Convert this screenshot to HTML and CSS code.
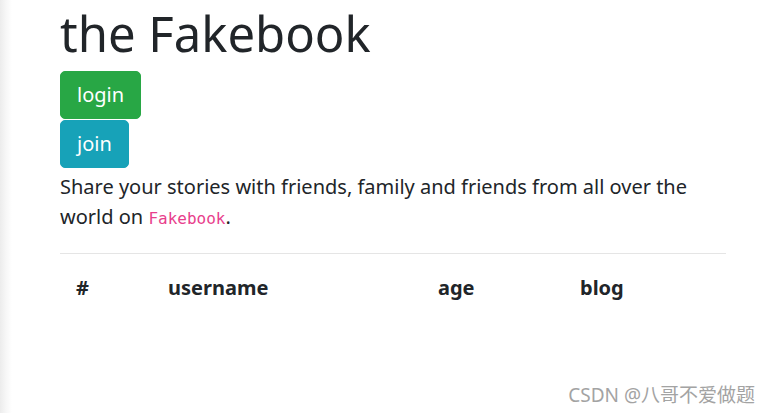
FILE: index.html
```html
<!DOCTYPE html>
<html>
<head>
<meta charset="utf-8">
<link rel="stylesheet" href="styles.css">
</head>
<body>
<div class="page">
  <div class="container">
    <h1 class="title">the Fakebook</h1>
    <div class="actions">
      <a class="btn btn-login">login</a>
      <a class="btn btn-join">join</a>
    </div>
    <p class="lead">Share your stories with friends, family and friends from all over the world on <code class="brand">Fakebook</code>.</p>
    <hr class="rule">
    <table class="users">
      <thead>
        <tr>
          <th class="c-id">#</th>
          <th class="c-user">username</th>
          <th class="c-age">age</th>
          <th class="c-blog">blog</th>
        </tr>
      </thead>
    </table>
  </div>
  <div class="watermark">CSDN @八哥不爱做题</div>
</div>
</body>
</html>
```
FILE: styles.css
```css
html, body {
  margin: 0;
  padding: 0;
  background: #fff;
}
.page {
  position: relative;
  width: 771px;
  height: 413px;
  overflow: hidden;
  font-family: "Noto Sans", "Open Sans", sans-serif;
  color: #212529;
  background: linear-gradient(to right, #ececec 0px, #f7f7f7 6px, #fff 12px);
}
.container {
  margin-left: 60px;
  width: 666px;
  display: flex;
  flex-direction: column;
}
.title {
  margin: 3px 0 8px 0;
  font-size: 49px;
  font-weight: 400;
  line-height: 60px;
}
.actions {
  display: flex;
  flex-direction: column;
  align-items: flex-start;
  gap: 1px;
}
.btn {
  display: inline-block;
  font-size: 20px;
  line-height: 30px;
  padding: 8px 16px;
  border: 1px solid transparent;
  border-radius: 5px;
  color: #fff;
}
.btn-login { background: #28a745; border-color: #28a745; }
.btn-join { background: #17a2b8; border-color: #17a2b8; }
.lead {
  margin: 4px 0 0 0;
  font-size: 20px;
  line-height: 30px;
}
.brand {
  font-family: "DejaVu Sans Mono", monospace;
  font-size: 16px;
  color: #e83e8c;
}
.rule {
  margin: 19px 0 0 0;
  border: 0;
  border-top: 1px solid rgba(0,0,0,.1);
}
.users {
  width: 100%;
  border-collapse: collapse;
  margin-top: 11px;
}
.users th {
  text-align: left;
  font-size: 20px;
  font-weight: 700;
  padding: 8px 16px;
  line-height: 30px;
}
.c-id { width: 60px; }
.c-user { width: 238px; }
.c-age { width: 110px; }
.watermark {
  position: absolute;
  right: 16px;
  bottom: 5px;
  font-size: 19px;
  color: #a3a3a3;
  font-family: "Noto Sans", "Noto Sans CJK SC", sans-serif;
}
```
